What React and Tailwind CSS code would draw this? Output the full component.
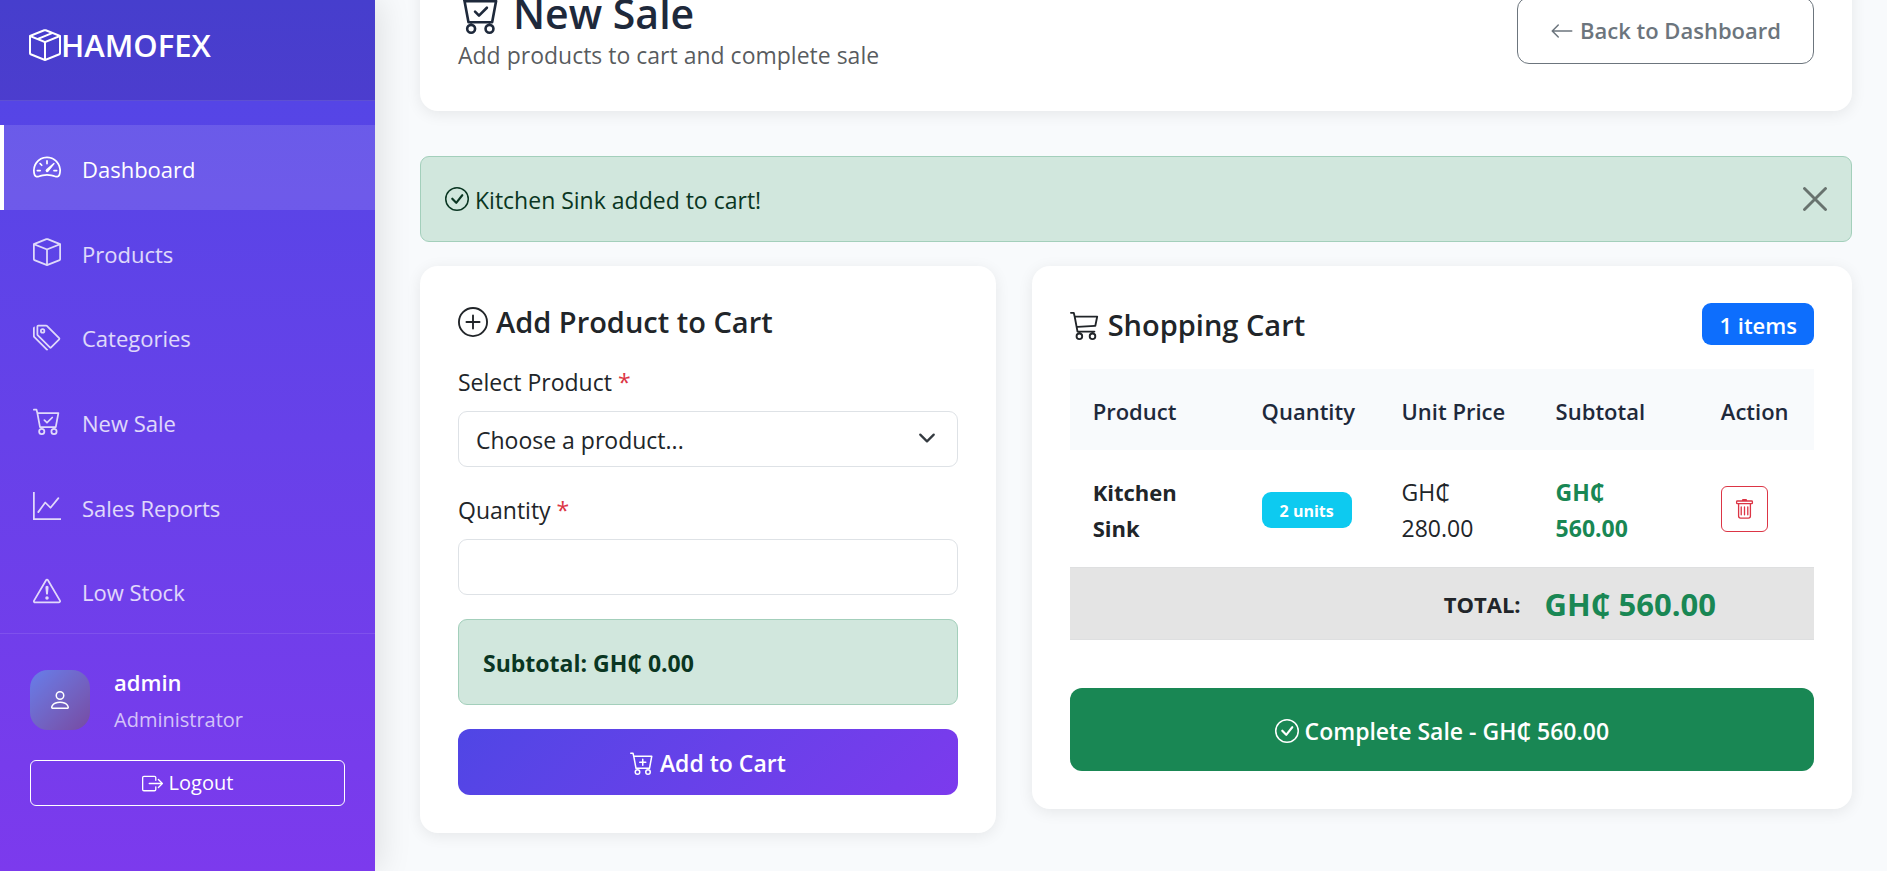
import { useState } from 'react'
import {
  BsArrowLeft, BsBox, BsBoxArrowRight, BsBoxSeam, BsCart3, BsCartCheck, BsCartPlus,
  BsCheckCircle, BsExclamationTriangle, BsGraphUp, BsPerson, BsPlusCircle,
  BsSpeedometer2, BsTags, BsTrash,
} from 'react-icons/bs'

const NAV_ITEMS = [
  { label: 'Dashboard',     icon: BsSpeedometer2, active: true },
  { label: 'Products',      icon: BsBox },
  { label: 'Categories',    icon: BsTags },
  { label: 'New Sale',      icon: BsCartCheck },
  { label: 'Sales Reports', icon: BsGraphUp },
  { label: 'Low Stock',     icon: BsExclamationTriangle },
]

const CART = [{ id: 1, name: 'Kitchen Sink', quantity: 2, price: 280 }]

const money = (n) => `GH₵ ${n.toFixed(2)}`

// ── Sidebar ──────────────────────────────────────────────────────────────────
function NavItem({ label, icon: Icon, active }) {
  return (
    <a
      href="#"
      className={
        active
          ? 'flex flex-1 items-center gap-[21px] border-l-4 border-white bg-white/12 px-[29px] text-white'
          : 'flex flex-1 items-center gap-[21px] border-l-4 border-transparent px-[29px] text-white/80'
      }
    >
      <Icon size={28} />
      <span className="pt-1">{label}</span>
    </a>
  )
}

function Sidebar() {
  return (
    <aside className="sticky top-0 flex h-screen w-[375px] shrink-0 flex-col bg-linear-to-b from-[#4f46e5] to-[#7c3aed] text-[22px] text-white shadow-[6px_0_30px_rgba(0,0,0,0.1)]">
      <div className="flex h-[101px] shrink-0 items-start border-b border-white/10 bg-black/10 px-[29px] pt-[27px]">
        <a href="#" className="flex items-center text-[31px] leading-9 font-semibold">
          <BsBoxSeam size={32} />
          HAMOFEX
        </a>
      </div>

      <nav className="flex min-h-0 flex-1 flex-col pt-6">
        {NAV_ITEMS.map((item) => <NavItem key={item.label} {...item} />)}
      </nav>

      <div className="h-[238px] shrink-0 border-t border-white/10 px-[30px] pt-7">
        <div className="flex items-center gap-6">
          <div className="flex size-[60px] items-center justify-center rounded-[18px] bg-linear-135 from-[#667eea] to-[#764ba2]">
            <BsPerson size={24} />
          </div>
          <div>
            <div className="text-[22px] leading-10 font-semibold">admin</div>
            <div className="text-[20px] leading-9 text-white/70">Administrator</div>
          </div>
        </div>
        <button className="mt-[22px] flex h-[46px] w-full items-center justify-center gap-1.5 rounded-md border border-white text-[20px]">
          <BsBoxArrowRight size={21} />
          Logout
        </button>
      </div>
    </aside>
  )
}

// ── Page pieces ──────────────────────────────────────────────────────────────
function Card({ className = '', children }) {
  return (
    <section className={`rounded-[18px] bg-white px-[38px] pt-[37px] pb-[38px] shadow-[0_3px_15px_rgba(0,0,0,0.08)] ${className}`}>
      {children}
    </section>
  )
}

function PageHeader() {
  return (
    <Card className="flex items-center justify-between">
      <div>
        <h1 className="flex items-center gap-[13px] text-[41px] leading-[50px] font-semibold text-[#1e293b]">
          <BsCartCheck size={42} />
          New Sale
        </h1>
        <p className="leading-[35px] text-[#212529]/75">Add products to cart and complete sale</p>
      </div>
      <a
        href="#"
        className="flex h-[67px] items-center gap-1.5 rounded-xl border border-[#6c757d] px-8 text-[22px] font-semibold text-[#6c757d]"
      >
        <BsArrowLeft size={24} />
        Back to Dashboard
      </a>
    </Card>
  )
}

function Alert({ onClose }) {
  return (
    <div
      role="alert"
      className="flex h-[86px] items-center gap-1.5 rounded-[9px] border border-[#a3cfbb] bg-[#d1e7dd] px-6 text-[#0a3622]"
    >
      <BsCheckCircle size={24} />
      <span className="pt-0.5">Kitchen Sink added to cart!</span>
      <button aria-label="Close" onClick={onClose} className="ml-auto text-black/50">
        <svg viewBox="0 0 16 16" className="size-6" fill="none" stroke="currentColor" strokeWidth="1.9" strokeLinecap="round">
          <path d="M1 1l14 14M15 1L1 15" />
        </svg>
      </button>
    </div>
  )
}

function AddProductCard() {
  return (
    <Card className="col-span-5">
      <h2 className="mb-[22px] flex items-center gap-2 text-[29px] leading-[38px] font-semibold">
        <BsPlusCircle size={30} />
        Add Product to Cart
      </h2>

      <label htmlFor="product" className="mb-2.5 block leading-[38px]">
        Select Product <span className="text-[#dc3545]">*</span>
      </label>
      <div className="relative mb-6">
        <select
          id="product"
          className="h-14 w-full appearance-none rounded-[9px] border border-[#dee2e6] bg-white px-[17px] pt-0.5"
        >
          <option>Choose a product...</option>
        </select>
        <svg
          viewBox="0 0 16 16"
          className="pointer-events-none absolute top-[18px] right-[22px] size-[18px]"
          fill="none" stroke="#343a40" strokeWidth="2" strokeLinecap="round" strokeLinejoin="round"
        >
          <path d="m2 5 6 6 6-6" />
        </svg>
      </div>

      <label htmlFor="quantity" className="mb-2.5 block leading-[38px]">
        Quantity <span className="text-[#dc3545]">*</span>
      </label>
      <input
        id="quantity"
        type="text"
        inputMode="numeric"
        className="mb-6 block h-14 w-full rounded-[9px] border border-[#dee2e6] px-[17px]"
      />

      <div className="mb-6 flex h-[86px] items-center rounded-[9px] border border-[#a3cfbb] bg-[#d1e7dd] px-6 pt-0.5 font-bold text-[#0a3622]">
        Subtotal: {money(0)}
      </div>

      <button className="flex h-[66px] w-full items-center justify-center gap-1.5 rounded-xl bg-linear-135 from-[#4f46e5] to-[#7c3aed] pt-0.5 font-semibold text-white">
        <BsCartPlus size={24} />
        Add to Cart
      </button>
    </Card>
  )
}

function CartCard() {
  const total = CART.reduce((sum, item) => sum + item.quantity * item.price, 0)

  return (
    <Card className="col-span-7">
      <div className="mb-6 flex items-center justify-between">
        <h2 className="flex items-center gap-2 pt-0.5 text-[29px] leading-9 font-semibold">
          <BsCart3 size={30} />
          Shopping Cart
        </h2>
        <span className="flex h-[42px] items-center rounded-[9px] bg-[#0d6efd] px-[17px] pt-0.5 text-[22px] font-semibold text-white">
          {CART.length} items
        </span>
      </div>

      <table className="w-full table-fixed text-left">
        <colgroup>
          <col className="w-[22.7%]" />
          <col className="w-[18.8%]" />
          <col className="w-[20.7%]" />
          <col className="w-[22.2%]" />
          <col />
        </colgroup>
        <thead>
          <tr className="h-[81px] bg-[#f8fafc] text-[22px] whitespace-nowrap text-[#1e293b]">
            <th className="pt-1 pl-[23px] font-semibold">Product</th>
            <th className="pt-1 pl-[23px] font-semibold">Quantity</th>
            <th className="pt-1 pl-[23px] font-semibold">Unit Price</th>
            <th className="pt-1 pl-[23px] font-semibold">Subtotal</th>
            <th className="pt-1 pl-[23px] font-semibold">Action</th>
          </tr>
        </thead>
        <tbody>
          {CART.map((item) => (
            <tr key={item.id} className="h-[117px]">
              <td className="px-[23px] pt-1 text-[22px] leading-9 font-bold">{item.name}</td>
              <td className="pt-0.5 pl-[23px]">
                <span className="inline-flex h-9 items-center rounded-[9px] bg-[#0dcaf0] px-[18px] pt-0.5 text-base font-bold whitespace-nowrap text-white">
                  {item.quantity} units
                </span>
              </td>
              <td className="px-[23px] pt-1 leading-9">{money(item.price)}</td>
              <td className="px-[23px] pt-1 leading-9 font-bold text-[#198754]">{money(item.quantity * item.price)}</td>
              <td className="pt-0.5 pl-[23px]">
                <button
                  aria-label={`Remove ${item.name}`}
                  className="flex h-[46px] w-[47px] items-center justify-center rounded-md border border-[#dc3545] text-[#dc3545]"
                >
                  <BsTrash size={21} />
                </button>
              </td>
            </tr>
          ))}
        </tbody>
        <tfoot>
          <tr className="h-[72px] border-y border-[#dedfe0] bg-[#e4e4e4] font-bold whitespace-nowrap">
            <td colSpan={3} className="px-3 pt-0.5 text-right text-[22px]">TOTAL:</td>
            <td colSpan={2} className="px-3 pt-0.5 text-[31px] leading-9 text-[#198754]">{money(total)}</td>
          </tr>
        </tfoot>
      </table>

      <button className="mt-12 flex h-[83px] w-full items-center justify-center gap-1.5 rounded-xl bg-[#198754] pt-1 font-semibold text-white">
        <BsCheckCircle size={24} />
        Complete Sale - {money(total)}
      </button>
    </Card>
  )
}

// ── Main component ───────────────────────────────────────────────────────────
export default function App() {
  const [showAlert, setShowAlert] = useState(true)

  return (
    <div className="flex h-screen overflow-hidden bg-[#f8fafc] font-['Open_Sans','Noto_Sans',sans-serif] text-[23px] text-[#212529]">
      <Sidebar />
      {/* page is scrolled a little, so the header card starts above the viewport */}
      <main className="-mt-[49px] min-w-0 flex-1 pr-[35px] pl-[45px]">
        <PageHeader />
        <div className="mt-[45px] flex flex-col gap-6">
          {showAlert && <Alert onClose={() => setShowAlert(false)} />}
          <div className="grid grid-cols-12 items-start gap-9">
            <AddProductCard />
            <CartCard />
          </div>
        </div>
      </main>
    </div>
  )
}
